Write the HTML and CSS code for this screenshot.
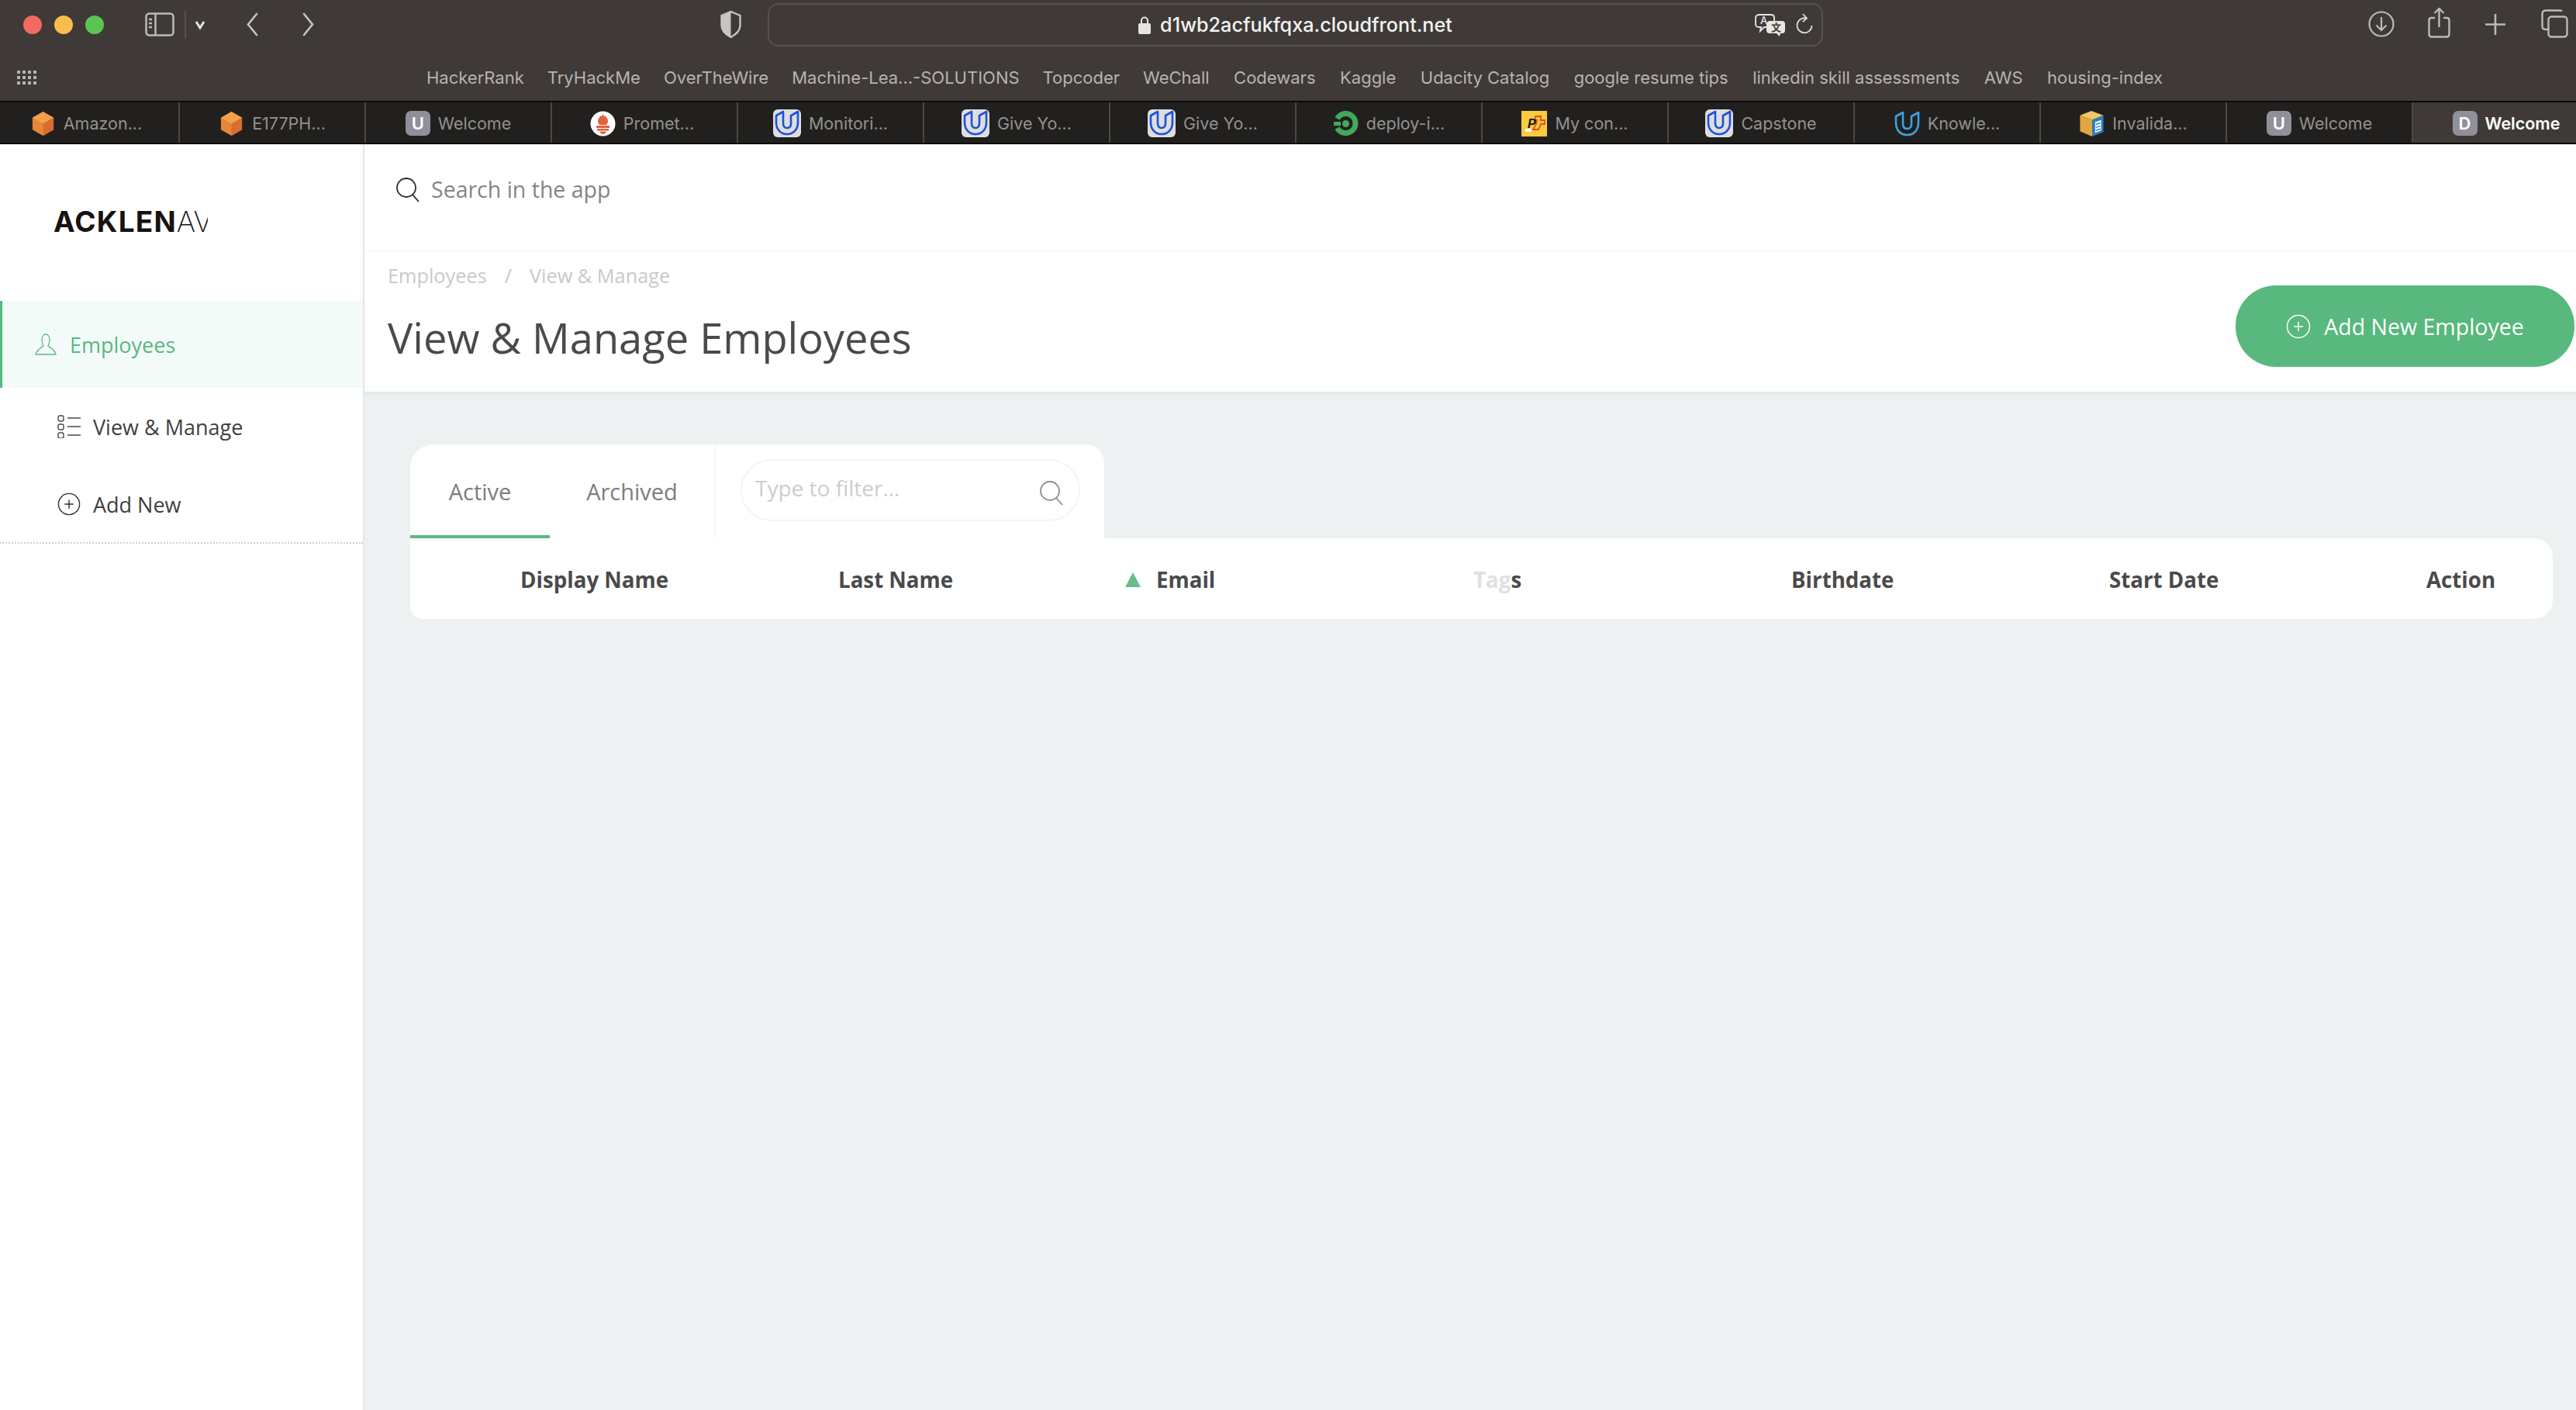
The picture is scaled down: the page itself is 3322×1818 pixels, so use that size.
FILE: index.html
```html
<!DOCTYPE html>
<html lang="en">
<head>
<meta charset="utf-8">
<title>View &amp; Manage Employees</title>
<link rel="stylesheet" href="styles.css">
</head>
<body>
<svg class="defs" width="0" height="0">
  <symbol id="amazon" viewBox="0 0 32 34"><path d="M16 1 30 9V25L16 33 2 25V9Z" fill="#e8873a"/><path d="M16 1 30 9 16 17 2 9Z" fill="#f3a04a"/><path d="M16 17 30 9V25L16 33Z" fill="#d96d2f"/></symbol>
  <symbol id="udacity" viewBox="0 0 36 36"><rect width="36" height="36" rx="6" fill="#dedede"/><path d="M13 3 4 8V17C4 26 10 32 18 32S32 26 32 17V3L23 8V18C23 22 21 24 18 24S13 22 13 18Z" fill="none" stroke="#1d4fe0" stroke-width="2.6" stroke-linejoin="round"/></symbol>
  <symbol id="prom" viewBox="0 0 33 33"><circle cx="16.500" cy="16.500" r="16" fill="#fff"/><path d="M16.500 3C17 7 19 8 20 6 20.500 9 23 9.500 23 13 23 15 22 17 21 18H12C11 17 10 15 10 13 10 10 12.500 9 13 6 14 8 15.500 7 16.500 3Z" fill="#e3613c"/><rect x="8" y="19" width="17" height="3" fill="#e3613c"/><rect x="9" y="23" width="15" height="2.500" fill="#e3613c"/><path d="M12 26.500H21C20 29 18 30 16.500 30S13 29 12 26.500Z" fill="#e3613c"/></symbol>
  <symbol id="circleci" viewBox="0 0 33 33"><path d="M5.500 10A12.500 12.500 0 1 1 5.500 22" fill="none" stroke="#43a85c" stroke-width="7"/><path d="M1 16.500H10" stroke="#43a85c" stroke-width="5"/><circle cx="16.500" cy="16.500" r="4.500" fill="#43a85c"/></symbol>
  <symbol id="knowledge" viewBox="0 0 33 33"><path d="M11 2 2 7V15C2 25 8 31 16.500 31S31 25 31 15V2L22 7V17C22 21 20 23 16.500 23S11 21 11 17Z" fill="none" stroke="#3aa3dd" stroke-width="2.600" stroke-linejoin="round"/></symbol>
  <symbol id="invalid" viewBox="0 0 33 34"><path d="M16 0 32 6 17 12 1 6Z" fill="#f4c566"/><path d="M1 6 17 12V34L1 27Z" fill="#e2a63f"/><path d="M17 12 32 6V28L17 34Z" fill="#2b7fbf"/><path d="M21 15 29 12V26L21 29Z" fill="#fff"/><path d="M22 18 28 16M22 22 28 20M22 26 28 24" stroke="#2b7fbf" stroke-width="1.500"/></symbol>
  <symbol id="plus-circle" viewBox="0 0 32 32"><circle cx="16" cy="16" r="14.500" fill="none" stroke="currentColor" stroke-width="1.500"/><path d="M16 10V22M10 16H22" stroke="currentColor" stroke-width="1.500"/></symbol>
  <symbol id="magnifier" viewBox="0 0 32 32"><circle cx="14" cy="13" r="12" fill="none" stroke="currentColor" stroke-width="1.800"/><path d="M22 22 30 31" stroke="currentColor" stroke-width="1.800"/></symbol>
</svg>

<header class="chrome">
  <div class="toolbar">
    <div class="lights"><span class="light red"></span><span class="light yellow"></span><span class="light green"></span></div>
    <svg class="tb tb-sidebar" width="38" height="44" viewBox="0 0 38 44"><rect x="1.500" y="7.500" width="35" height="28" rx="4" fill="none" stroke="#bdbab6" stroke-width="2.500"/><path d="M13.500 7V36" stroke="#bdbab6" stroke-width="2.500"/><path d="M5 15H9M5 20H9M5 25H9" stroke="#bdbab6" stroke-width="2.500"/></svg>
    <span class="tb-divider"></span>
    <svg class="tb tb-caret" width="14" height="44" viewBox="0 0 14 44"><path d="M2 18 7 26 12 18" fill="none" stroke="#e4e2df" stroke-width="3"/></svg>
    <svg class="tb tb-back" width="16" height="44" viewBox="0 0 16 44"><path d="M14 8 3 21.500 14 35" fill="none" stroke="#c8c5c1" stroke-width="2.600" stroke-linecap="round"/></svg>
    <svg class="tb tb-forward" width="16" height="44" viewBox="0 0 16 44"><path d="M2 8 13 21.500 2 35" fill="none" stroke="#c8c5c1" stroke-width="2.600" stroke-linecap="round"/></svg>
    <svg class="tb tb-shield" width="27" height="44" viewBox="0 0 27 44"><path d="M13.500 5 25.500 10V23C25.500 30 19 35 13.500 38 8 35 1.500 30 1.500 23V10Z" fill="none" stroke="#c8c5c1" stroke-width="2.400"/><path d="M13.500 5V38C8 35 1.500 30 1.500 23V10Z" fill="#c8c5c1"/></svg>
    <div class="urlbar">
      <span></span>
      <div class="url">
        <svg width="16" height="24" viewBox="0 0 16 24"><path d="M4 11V6.500A4 4 0 0 1 12 6.500V11" fill="none" stroke="#e4e4e4" stroke-width="2"/><rect y="10" width="16" height="14" rx="2" fill="#e4e4e4"/></svg>
        <span class="url-text">d1wb2acfukfqxa.cloudfront.net</span>
      </div>
      <div class="url-tools">
        <svg width="40" height="30" viewBox="0 0 40 30"><path d="M5 2H21C24 2 25 4 25 6V14C25 17 23 18 21 18H12L7 23 8 18H5C3 18 1 17 1 14V6C1 4 3 2 5 2Z" fill="#3f3a37" stroke="#e8e6e3" stroke-width="1.800"/><text x="7" y="14" class="tr-a">A</text><path d="M19 10H35C38 10 39 12 39 14V22C39 25 37 26 35 26H33L32 30 28 26H19C17 26 15 25 15 22V14C15 12 17 10 19 10Z" fill="#e8e6e3"/><text x="21" y="23" class="tr-b">文</text></svg>
        <svg width="22" height="30" viewBox="0 0 22 30"><path d="M13 6.500A9.500 9.500 0 1 0 20.500 16" fill="none" stroke="#dcdad7" stroke-width="1.800"/><path d="M9 1 14 6.500 9 11" fill="none" stroke="#dcdad7" stroke-width="1.800"/></svg>
      </div>
    </div>
    <svg class="tb tb-download" width="34" height="44" viewBox="0 0 34 44"><circle cx="17" cy="21" r="15.500" fill="none" stroke="#bdbab6" stroke-width="2.200"/><path d="M17 12V29M10.500 22.500 17 29 23.500 22.500" fill="none" stroke="#bdbab6" stroke-width="2.200"/></svg>
    <svg class="tb tb-share" width="29" height="44" viewBox="0 0 29 44"><path d="M9 13H5C3 13 1.500 14 1.500 16V34C1.500 36 3 37.500 5 37.500H24C26 37.500 27.500 36 27.500 34V16C27.500 14 26 13 24 13H20" fill="none" stroke="#bdbab6" stroke-width="2.400"/><path d="M14.500 25V1M8.500 7 14.500 1 20.500 7" fill="none" stroke="#bdbab6" stroke-width="2.400"/></svg>
    <svg class="tb tb-plus" width="28" height="44" viewBox="0 0 28 44"><path d="M14 8V35M1 21.500H27" stroke="#bdbab6" stroke-width="2.600"/></svg>
    <svg class="tb tb-tabs" width="35" height="44" viewBox="0 0 35 44"><path d="M27 4.500C26.500 4 26 3.500 24 3.500H6C3 3.500 1.500 5 1.500 8V24C1.500 27 3 28 6 28H9" fill="none" stroke="#bdbab6" stroke-width="2.400"/><rect x="9.500" y="11.500" width="24" height="26" rx="4" fill="none" stroke="#bdbab6" stroke-width="2.400"/></svg>
  </div>
  <div class="bookmarks">
    <svg class="apps" width="25" height="18" viewBox="0 0 25 18"><g fill="#b5b2ae"><rect width="4" height="4"/><rect x="7" width="4" height="4"/><rect x="14" width="4" height="4"/><rect x="21" width="4" height="4"/><rect y="7" width="4" height="4"/><rect x="7" y="7" width="4" height="4"/><rect x="14" y="7" width="4" height="4"/><rect x="21" y="7" width="4" height="4"/><rect y="14" width="4" height="4"/><rect x="7" y="14" width="4" height="4"/><rect x="14" y="14" width="4" height="4"/><rect x="21" y="14" width="4" height="4"/></g></svg>
    <nav class="bookmark-list">
      <a>HackerRank</a><a>TryHackMe</a><a>OverTheWire</a><a>Machine-Lea...-SOLUTIONS</a><a>Topcoder</a><a>WeChall</a><a>Codewars</a><a>Kaggle</a><a>Udacity Catalog</a><a>google resume tips</a><a>linkedin skill assessments</a><a>AWS</a><a>housing-index</a>
    </nav>
  </div>
  <div class="tabs">
    <div class="tab tab-first"><svg class="fav"><use href="#amazon"/></svg><span>Amazon...</span></div>
    <div class="tab"><svg class="fav"><use href="#amazon"/></svg><span>E177PH...</span></div>
    <div class="tab"><span class="fav-letter">U</span><span>Welcome</span></div>
    <div class="tab tab-prom"><svg class="fav"><use href="#prom"/></svg><span>Promet...</span></div>
    <div class="tab"><svg class="fav fav-u"><use href="#udacity"/></svg><span>Monitori...</span></div>
    <div class="tab"><svg class="fav fav-u"><use href="#udacity"/></svg><span>Give Yo...</span></div>
    <div class="tab"><svg class="fav fav-u"><use href="#udacity"/></svg><span>Give Yo...</span></div>
    <div class="tab"><svg class="fav"><use href="#circleci"/></svg><span>deploy-i...</span></div>
    <div class="tab"><svg class="fav" viewBox="0 0 33 33"><rect width="33" height="33" fill="#f9cb3f"/><path d="M18 7H25V12H30V17H25L22 24H15L19 17 20 12H18Z" fill="none" stroke="#ea4a22" stroke-width="1.800"/><rect x="5" y="23" width="8" height="4" fill="#fff"/><text x="8" y="22" class="mycon-p">P</text></svg><span>My con...</span></div>
    <div class="tab"><svg class="fav fav-u"><use href="#udacity"/></svg><span>Capstone</span></div>
    <div class="tab"><svg class="fav"><use href="#knowledge"/></svg><span>Knowle...</span></div>
    <div class="tab"><svg class="fav"><use href="#invalid"/></svg><span>Invalida...</span></div>
    <div class="tab"><span class="fav-letter">U</span><span>Welcome</span></div>
    <div class="tab tab-active"><span class="fav-letter">D</span><span>Welcome</span></div>
  </div>
</header>

<div class="app">
  <aside class="sidebar">
    <div class="logo"><div class="logo-clip"><b>ACKLEN</b><span>AV</span></div></div>
    <a class="nav-main">
      <svg class="nav-icon-user" width="28" height="28" viewBox="0 0 28 28"><path d="M9 8C9 4 11 1 14 1S19 4 19 8C19 12 17.500 14 17 16 18 18 25 19 27 27H1C3 19 10 18 11 16 10.500 14 9 12 9 8Z" fill="none" stroke="#59b87e" stroke-width="1.300"/></svg>
      <span>Employees</span>
    </a>
    <ul class="subnav">
      <li>
        <svg width="30" height="30" viewBox="0 0 30 30"><g fill="none" stroke="#4a4a4a" stroke-width="1.400"><rect x="1" y="1" width="7" height="7" rx="2"/><rect x="1" y="12" width="7" height="7" rx="2"/><rect x="1" y="23" width="7" height="7" rx="2"/><path d="M13 4H30M13 15H30M13 26H30"/></g></svg>
        <span>View &amp; Manage</span>
      </li>
      <li>
        <svg class="ico-dark" width="30" height="30"><use href="#plus-circle"/></svg>
        <span>Add New</span>
      </li>
    </ul>
  </aside>

  <main class="main">
    <header class="page-header">
      <div class="searchbar">
        <svg class="ico-dark" width="32" height="32"><use href="#magnifier"/></svg>
        <span>Search in the app</span>
      </div>
      <div class="page-title-row">
        <div>
          <div class="crumbs"><span>Employees</span><span>/</span><span>View &amp; Manage</span></div>
          <h1>View &amp; Manage Employees</h1>
        </div>
        <button class="btn-add">
          <svg width="32" height="32"><use href="#plus-circle"/></svg>
          <span>Add New Employee</span>
        </button>
      </div>
    </header>

    <section class="content">
      <div class="tabcard">
        <div class="tabcard-tab is-active">Active</div>
        <div class="tabcard-tab tabcard-archived">Archived</div>
        <div class="filter-cell">
          <div class="filter">
            <span>Type to filter...</span>
            <svg width="32" height="32"><use href="#magnifier"/></svg>
          </div>
        </div>
      </div>
      <div class="table-head">
        <div>Display Name</div>
        <div>Last Name</div>
        <div class="col-sorted"><i class="sort-arrow"></i>Email</div>
        <div><span class="faded">Tag</span>s</div>
        <div>Birthdate</div>
        <div>Start Date</div>
        <div>Action</div>
      </div>
    </section>
  </main>
</div>
</body>
</html>
```
FILE: styles.css
```css
* { box-sizing: border-box; }
html, body { margin: 0; height: 100%; }
body {
  width: 3322px;
  height: 1818px;
  overflow: hidden;
  background: #fff;
  font-family: "Open Sans", "Noto Sans", sans-serif;
  color: #4a4a4a;
}
.defs { position: absolute; }
svg { display: block; flex: none; }

/* Browser chrome */
.chrome { background: #3f3a37; font-family: Inter, "Liberation Sans", sans-serif; }
.toolbar { height: 64px; display: flex; align-items: center; padding-left: 30px; }
.lights { display: flex; gap: 16px; }
.light { width: 24px; height: 24px; border-radius: 50%; }
.red { background: #f46a5f; }
.yellow { background: #f8bd4c; }
.green { background: #5dc452; }
.tb-sidebar { margin-left: 53px; }
.tb-divider { width: 2px; height: 36px; background: #55504c; margin-left: 13px; }
.tb-caret { margin-left: 11px; }
.tb-back { margin-left: 52px; }
.tb-forward { margin-left: 57px; }
.tb-shield { margin-left: 523px; }
.urlbar {
  margin-left: 34px;
  width: 1361px;
  height: 56px;
  margin-top: -1px;
  border: 2px solid #56514d;
  border-radius: 14px;
  display: grid;
  grid-template-columns: 1fr auto 1fr;
  align-items: center;
}
.url { display: flex; align-items: center; gap: 12px; }
.url-text { color: #f2f2f2; font-size: 25.200px; font-weight: 500; white-space: nowrap; }
.url-tools { display: flex; justify-content: flex-end; align-items: center; gap: 13px; padding-right: 11px; }
.tr-a { font: 500 13px Inter, sans-serif; fill: #e8e6e3; }
.tr-b { font: 700 13px "Noto Sans CJK SC", sans-serif; fill: #3f3a37; }
.tb-download { margin-left: 703px; }
.tb-share { margin-left: 43px; }
.tb-plus { margin-left: 44px; }
.tb-tabs { margin-left: 45px; }

.bookmarks { height: 66px; padding-top: 6px; display: flex; align-items: center; padding-left: 22px; }
.apps { flex: none; }
.bookmark-list { display: flex; gap: 30px; margin-left: 503px; color: #b7b3af; font-size: 22px; white-space: nowrap; }
.bookmark-list a:nth-child(n+7) { margin-left: 1.500px; }

.tabs { height: 56px; display: flex; overflow: hidden; background: #22201e; border-top: 2px solid #0a0a0a; border-bottom: 2px solid #0a0a0a; }
.tab {
  flex: none;
  width: 240px;
  padding-top: 2px;
  display: flex;
  align-items: center;
  justify-content: center;
  gap: 10px;
  color: #94918e;
  font-size: 21.500px;
  border-right: 2px solid #4b4845;
  white-space: nowrap;
}
.tab-first { margin-left: -8px; }
.tab-prom { padding-right: 6px; }
.tab-active { background: #3f3a37; color: #fff; font-weight: 600; border-right: 0; }
.fav { width: 33px; height: 33px; }
.fav-u { width: 36px; height: 36px; }
.fav-letter {
  width: 32px;
  height: 32px;
  border-radius: 7px;
  background: #8f909a;
  color: #fff;
  font-size: 22px;
  font-weight: 600;
  display: flex;
  align-items: center;
  justify-content: center;
}
.mycon-p { font: italic 700 16px "Liberation Sans", sans-serif; fill: #111; }

/* App shell */
.app { height: 1632px; display: flex; }
.sidebar { width: 470px; flex: none; border-right: 2px solid #e6e8e8; background: #fff; }
.logo { height: 202px; padding: 85px 0 0 69px; }
.logo-clip { width: 199px; overflow: hidden; white-space: nowrap; font-family: Inter, "Open Sans", sans-serif; font-size: 37px; line-height: 30px; color: #17120f; }
.logo-clip b { font-weight: 700; letter-spacing: 1.200px; }
.logo-clip span { font-weight: 200; }
.nav-main {
  height: 112px;
  display: flex;
  align-items: center;
  gap: 17px;
  padding-left: 42px;
  border-left: 3px solid #59b87e;
  background: #f3fbf9;
  color: #59b87e;
  font-size: 27px;
}
.subnav { list-style: none; margin: 0; padding: 0 0 0 74px; height: 201px; border-bottom: 2px dotted #cfcfcf; }
.subnav li { height: 100px; display: flex; align-items: center; gap: 16px; font-size: 27px; color: #3f3f3f; }
.ico-dark { color: #2e2e2e; }

.main { flex: 1; min-width: 0; display: flex; flex-direction: column; background: #edf1f2; }
.page-header { background: #fff; height: 321px; flex: none; border-bottom: 2px solid #e4e7e7; box-shadow: 0 3px 6px rgba(0, 0, 0, .03); }
.searchbar {
  height: 139px;
  padding: 0 0 22px 40px;
  display: flex;
  align-items: center;
  gap: 14px;
  color: #858585;
  font-size: 28.500px;
  border-bottom: 2px solid #fafafa;
}
.searchbar svg { margin-top: 2px; }
.page-title-row { display: flex; justify-content: space-between; padding: 0 2px 0 30px; }
.crumbs { display: flex; gap: 23px; margin-top: 12px; color: #c9c9c9; font-size: 25.300px; line-height: 36px; }
h1 { margin: 24px 0 0; font-size: 54.200px; font-weight: 400; line-height: 76px; color: #4a4a4a; }
.btn-add {
  margin-top: 43px;
  width: 437px;
  height: 105px;
  border: 0;
  border-radius: 52px;
  background: #58b87d;
  color: #fff;
  display: flex;
  align-items: center;
  justify-content: center;
  gap: 17px;
  font-family: inherit;
  font-size: 28.500px;
}

.content { padding: 66px 30px 0 59px; }
.tabcard { width: 895px; height: 121px; background: #fff; border-radius: 30px 24px 0 0; display: flex; }
.tabcard-tab { width: 180px; display: flex; align-items: center; justify-content: center; font-size: 29px; color: #7d7d7d; }
.tabcard-tab.is-active { border-bottom: 4px solid #58b87d; padding-top: 4px; }
.tabcard-archived { width: 214px; border-right: 2px solid #f5f6f6; }
.filter-cell { flex: 1; padding: 19px 31px 0 32px; }
.filter {
  height: 80px;
  border: 2px solid #f3f4f4;
  border-radius: 40px;
  display: flex;
  align-items: center;
  justify-content: space-between;
  padding: 0 19px 0 17px;
  color: #cdcdcd;
  font-size: 28px;
}
.filter svg { color: #8c8c8c; margin-top: 8px; }
.filter span { margin-top: -6px; }
.table-head {
  height: 104px;
  padding-top: 2px;
  background: #fff;
  border-radius: 0 24px 24px 16px;
  padding-left: 142px;
  display: grid;
  grid-template-columns: 410px 370px 449px 410px 410px 409px 1fr;
  align-items: center;
  font-size: 27.700px;
  font-weight: 700;
  color: #4a4a4a;
}
.col-sorted { display: flex; align-items: center; gap: 20px; }
.sort-arrow { width: 0; height: 0; border-left: 10px solid transparent; border-right: 10px solid transparent; border-bottom: 19px solid #66bd8e; }
.faded { color: #e0e0e0; }
```
